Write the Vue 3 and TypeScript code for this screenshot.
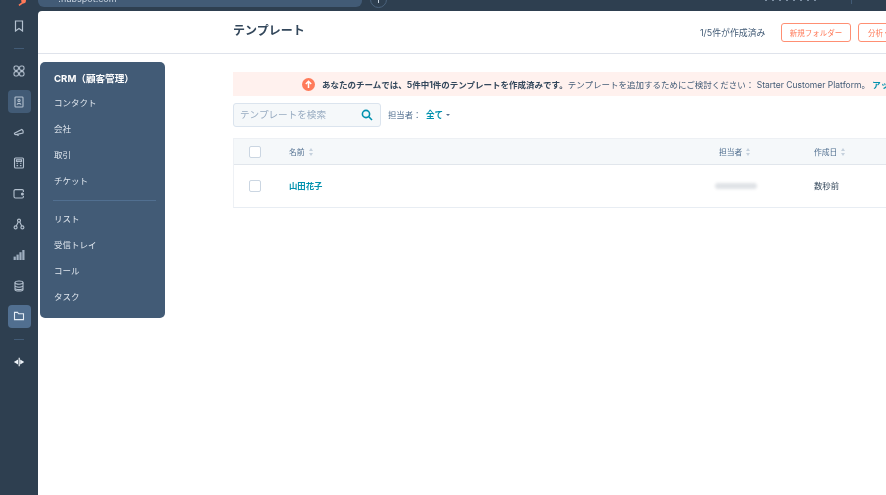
<script setup lang="ts">
const sideIcons: { id: string; active?: string }[] = [
  { id: 'grid' },
  { id: 'contact', active: 'soft' },
  { id: 'mega' },
  { id: 'calc' },
  { id: 'wallet' },
  { id: 'tree' },
  { id: 'chart' },
  { id: 'db' },
  { id: 'folder', active: 'strong' },
]
const menuTop = ['コンタクト', '会社', '取引', 'チケット']
const menuBottom = ['リスト', '受信トレイ', 'コール', 'タスク']
</script>

<template>
  <div class="app">
    <aside class="rail">
      <svg class="logo" width="10" height="6" viewBox="0 0 10 6">
        <path d="M2 5.4 6 2.4" stroke="#ff7a59" stroke-width="1.6" fill="none" />
        <circle cx="6.6" cy="1" r="2.4" fill="#ff7a59" />
      </svg>
      <button class="rail-btn">
        <svg width="12" height="12" viewBox="0 0 12 12" fill="none" stroke="#b4c1cf" stroke-width="1.2">
          <path d="M2.5 1h7v10L6 8.6 2.5 11z" />
        </svg>
      </button>
      <span class="rail-div"></span>
      <button
        v-for="item in sideIcons"
        :key="item.id"
        class="rail-btn"
        :class="item.active"
      >
        <svg width="12" height="12" viewBox="0 0 12 12" fill="none" stroke="#b4c1cf" stroke-width="1.1">
          <template v-if="item.id === 'grid'">
            <rect x="1" y="1" width="4.4" height="4.4" rx="1.6" />
            <rect x="6.6" y="1" width="4.4" height="4.4" rx="1.6" />
            <rect x="1" y="6.6" width="4.4" height="4.4" rx="1.6" />
            <rect x="6.6" y="6.6" width="4.4" height="4.4" rx="1.6" />
          </template>
          <template v-else-if="item.id === 'contact'">
            <rect x="2" y="1" width="8" height="10" rx="0.8" />
            <circle cx="6" cy="4.4" r="1.1" />
            <path d="M4 8.6c.4-1.6 3.6-1.6 4 0" />
          </template>
          <template v-else-if="item.id === 'mega'">
            <path d="M1.4 7.2 8.8 3.4c1.2.8 1.6 2.4 1.2 3.6L3 8.6C2 8.7 1.4 8.1 1.4 7.2z" />
            <path d="M4 8.4c.2.9 1.1 1.1 1.8.7" />
          </template>
          <template v-else-if="item.id === 'calc'">
            <rect x="1.5" y="1" width="9" height="10" rx="1" />
            <rect x="3.4" y="2.8" width="5.2" height="1.6" />
            <path d="M3.5 6.2h1.6M6.9 6.2h1.6M3.5 8.6h1.6M6.9 8.6h1.6" />
          </template>
          <template v-else-if="item.id === 'wallet'">
            <path d="M10.4 4V2.8A1.2 1.2 0 0 0 9.2 1.6H2.4A1.4 1.4 0 0 0 1 3v5.6A1.4 1.4 0 0 0 2.4 10h6.8a1.2 1.2 0 0 0 1.2-1.2V8" />
            <circle cx="9.4" cy="6" r="1.5" fill="#b4c1cf" stroke="none" />
          </template>
          <template v-else-if="item.id === 'tree'">
            <circle cx="6" cy="2.6" r="1.5" />
            <circle cx="2.6" cy="9.4" r="1.5" />
            <circle cx="9.4" cy="9.4" r="1.5" />
            <path d="M5.2 4 3.3 8M6.8 4l1.9 4" />
          </template>
          <template v-else-if="item.id === 'chart'">
            <g fill="#9fafc0" stroke="none">
              <rect x="0.6" y="7.6" width="2.2" height="3.4" />
              <rect x="3.5" y="5.6" width="2.2" height="5.4" />
              <rect x="6.4" y="3.2" width="2.2" height="7.8" />
              <rect x="9.3" y="1" width="2.2" height="10" />
            </g>
          </template>
          <template v-else-if="item.id === 'db'">
            <ellipse cx="6" cy="2.6" rx="4" ry="1.6" />
            <path d="M2 2.6v6.8c0 .9 1.8 1.6 4 1.6s4-.7 4-1.6V2.6M2 5.6c0 .9 1.8 1.6 4 1.6s4-.7 4-1.6M2 8c0 .9 1.8 1.6 4 1.6S10 8.9 10 8" />
          </template>
          <template v-else>
            <path d="M1.5 9.6V2.4h3l1.2 1.4h4.8v5.8z" stroke="#e5edf5" />
          </template>
        </svg>
      </button>
      <span class="rail-div low"></span>
      <button class="rail-btn">
        <svg width="12" height="12" viewBox="0 0 12 12" fill="#eef3f8">
          <path d="M0.8 6 5 3.4v5.2z" />
          <path d="M5.6 1.8h1.2v8.4H5.6z" />
          <path d="M7.2 3.6 11.2 6 7.2 8.4z" />
        </svg>
      </button>
    </aside>

    <div class="stage">
      <div class="topbar">
        <div class="tab"><span class="tab-text">*.hubspot.com</span></div>
        <span class="plus"></span>
        <span class="top-dots"></span>
        <span class="top-sep"></span>
      </div>

      <main class="panel">
        <header class="head">
          <h1 class="title">テンプレート</h1>
          <span class="count">1/5件が作成済み</span>
          <button class="btn folder">新規フォルダー</button>
          <button class="btn analyze">分析 ▾</button>
        </header>

        <section class="content">
          <div class="banner">
            <svg class="up" width="13" height="13" viewBox="0 0 13 13">
              <circle cx="6.5" cy="6.5" r="6.5" fill="#ff7a59" />
              <path d="M6.5 10V3.4M3.8 6 6.5 3.3 9.2 6" stroke="#fff" stroke-width="1.5" fill="none" />
            </svg>
            <span class="banner-text"><b>あなたのチームでは、5件中1件のテンプレートを作成済みです。</b>テンプレートを追加するためにご検討ください： Starter Customer Platform。 <a>アップグレード</a></span>
          </div>

          <div class="filters">
            <div class="search">
              <span class="placeholder">テンプレートを検索</span>
              <svg width="12" height="12" viewBox="0 0 12 12" fill="none" stroke="#0091ae" stroke-width="1.6">
                <circle cx="5" cy="5" r="3.6" />
                <path d="M7.8 7.8 11 11" />
              </svg>
            </div>
            <span class="owner">担当者：</span>
            <span class="all">全て</span>
            <span class="caret"></span>
          </div>

          <div class="table">
            <div class="row thead">
              <span class="check"></span>
              <span class="th">名前<i class="sort"></i></span>
              <span class="th">担当者<i class="sort"></i></span>
              <span class="th">作成日<i class="sort"></i></span>
            </div>
            <div class="row tbody">
              <span class="check"></span>
              <a class="name">山田花子</a>
              <span class="smudge"></span>
              <span class="date">数秒前</span>
            </div>
          </div>
        </section>
      </main>
    </div>

    <nav class="flyout">
      <div class="fly-title">CRM（顧客管理）</div>
      <a v-for="m in menuTop" :key="m" class="fly-item">{{ m }}</a>
      <div class="fly-div"></div>
      <a v-for="m in menuBottom" :key="m" class="fly-item">{{ m }}</a>
    </nav>
  </div>
</template>

<style>
html, body { margin: 0; background: #fff; overflow: hidden; }
</style>

<style scoped>
.app {
  position: relative;
  width: 886px;
  height: 495px;
  overflow: hidden;
  display: flex;
  background: #2e3f50;
  font-family: Inter, "Noto Sans CJK JP", sans-serif;
  color: #33475b;
  filter: blur(0.35px);
}
.rail {
  width: 38px;
  flex: none;
  display: flex;
  flex-direction: column;
  align-items: center;
  padding-top: 14.3px;
  gap: 7.3px;
  position: relative;
}
.logo { position: absolute; left: 17px; top: 0; }
.rail-btn {
  width: 23px;
  height: 23.4px;
  flex: none;
  border: 0;
  padding: 0;
  border-radius: 4px;
  background: transparent;
  display: flex;
  align-items: center;
  justify-content: center;
}
.rail-btn.soft { background: #425b76; }
.rail-btn.strong { background: #516f90; }
.rail-div { width: 10px; height: 1px; background: #425b76; flex: none; margin: 2.6px 0 3.4px; }
.rail-div.low { margin: 3.4px 0 3.4px; }
.stage { flex: 1; min-width: 0; display: flex; flex-direction: column; }
.topbar { height: 11px; flex: none; display: flex; align-items: flex-start; position: relative; }
.tab {
  width: 324px;
  height: 7px;
  background: #425b76;
  border-radius: 0 0 6px 6px;
  overflow: hidden;
  display: flex;
  align-items: flex-end;
  padding: 0 0 4px 17px;
  box-sizing: border-box;
}
.tab-text { font-size: 9px; line-height: 9px; color: #cbd6e2; }
.plus {
  width: 17px;
  height: 17px;
  margin: -9px 0 0 8px;
  border: 1px solid #4a627c;
  border-radius: 50%;
  box-sizing: border-box;
  position: relative;
}
.plus::after {
  content: "";
  position: absolute;
  left: 7px;
  top: 8px;
  width: 1px;
  height: 3px;
  background: #cbd6e2;
}
.top-dots {
  width: 52px;
  height: 1px;
  margin-left: 378px;
  background: repeating-linear-gradient(90deg, #7d8fa2 0 2px, transparent 2px 7px);
}
.top-sep { width: 1px; height: 4px; margin-left: 34px; background: #425b76; }
.panel {
  flex: 1;
  background: #fff;
  border-top-left-radius: 4px;
  display: flex;
  flex-direction: column;
  min-height: 0;
}
.head {
  height: 42px;
  flex: none;
  box-sizing: content-box;
  border-bottom: 1px solid #dfe3eb;
  padding-left: 195px;
  display: flex;
  align-items: center;
  white-space: nowrap;
}
.title {
  margin: 0 0 3px;
  width: 467px;
  flex: none;
  font-size: 12px;
  line-height: 18px;
  font-weight: 700;
  color: #33475b;
}
.count { width: 81px; flex: none; font-size: 8.9px; color: #425b76; }
.btn {
  height: 19px;
  padding: 0;
  flex: none;
  background: #fff;
  border: 1px solid #ff8f73;
  border-radius: 3px;
  color: #ff7a59;
  font-family: inherit;
  font-size: 7.5px;
}
.folder { width: 70px; margin-right: 7px; }
.analyze { width: 50px; text-align: left; padding-left: 9px; }
.content { padding: 18px 0 0 195px; }
.banner {
  height: 24px;
  display: flex;
  align-items: center;
  padding-left: 69px;
  background: #fff1ee;
  white-space: nowrap;
  overflow: hidden;
}
.up { flex: none; margin-right: 7px; }
.banner-text { font-size: 8.5px; color: #425b76; padding-bottom: 1px; }
.banner-text b { color: #33475b; }
.banner-text a { color: #0091ae; font-weight: 700; }
.filters { display: flex; align-items: center; margin-top: 7px; height: 24px; }
.search {
  width: 148px;
  height: 24px;
  box-sizing: border-box;
  padding: 0 7px 0 6px;
  display: flex;
  align-items: center;
  justify-content: space-between;
  background: #f5f8fa;
  border: 1px solid #dbe4ee;
  border-radius: 3px;
}
.placeholder { font-size: 9.6px; color: #99acc2; padding-bottom: 2px; }
.owner { margin-left: 7px; width: 38px; font-size: 8.4px; color: #516f90; padding-bottom: 2px; }
.all { font-size: 8.6px; font-weight: 700; color: #0091ae; padding-bottom: 2px; }
.caret {
  margin-left: 3px;
  border-left: 2.5px solid transparent;
  border-right: 2.5px solid transparent;
  border-top: 2.5px solid #516f90;
}
.table { margin-top: 11px; width: 700px; border-bottom: 1px solid #e8edf3; border-left: 1px solid #eef1f5; }
.row {
  display: grid;
  grid-template-columns: 55px 430px 95px 1fr;
  align-items: center;
}
.thead { height: 25px; background: #f5f8fa; border-top: 1px solid #edf0f4; border-bottom: 1px solid #e1e6ec; }
.tbody { height: 42px; }
.check {
  width: 12px;
  height: 12px;
  margin-left: 15px;
  background: #fff;
  border: 1px solid #cbd6e2;
  border-radius: 2px;
  box-sizing: border-box;
}
.th { font-size: 7.8px; color: #516f90; display: flex; align-items: center; gap: 4px; }
.sort { width: 4px; height: 8px; position: relative; }
.sort::before, .sort::after {
  content: "";
  position: absolute;
  left: 0;
  border-left: 2px solid transparent;
  border-right: 2px solid transparent;
}
.sort::before { top: 0; border-bottom: 3px solid #c5d1dd; }
.sort::after { bottom: 0; border-top: 3px solid #c5d1dd; }
.name { font-size: 8.4px; font-weight: 700; color: #0091ae; padding-bottom: 2px; }
.smudge {
  width: 42px;
  height: 6px;
  margin-left: -4px;
  border-radius: 3px;
  background: #dfe2e6;
  filter: blur(1.5px);
}
.date { font-size: 8.4px; color: #33475b; padding-bottom: 2px; }
.flyout {
  position: absolute;
  left: 40px;
  top: 62px;
  width: 125px;
  height: 256px;
  box-sizing: border-box;
  padding-top: 9px;
  background: #425b76;
  border-radius: 5px;
  display: flex;
  flex-direction: column;
}
.fly-title {
  height: 15px;
  line-height: 15px;
  padding-left: 14px;
  margin-bottom: 3.5px;
  font-size: 9.6px;
  font-weight: 700;
  color: #fff;
}
.fly-item {
  height: 26px;
  line-height: 26px;
  padding-left: 14px;
  font-size: 8.5px;
  color: #dfe6ee;
}
.fly-div { height: 1px; margin: 6px 9px 5.5px 13px; background: #516f90; flex: none; }
</style>
